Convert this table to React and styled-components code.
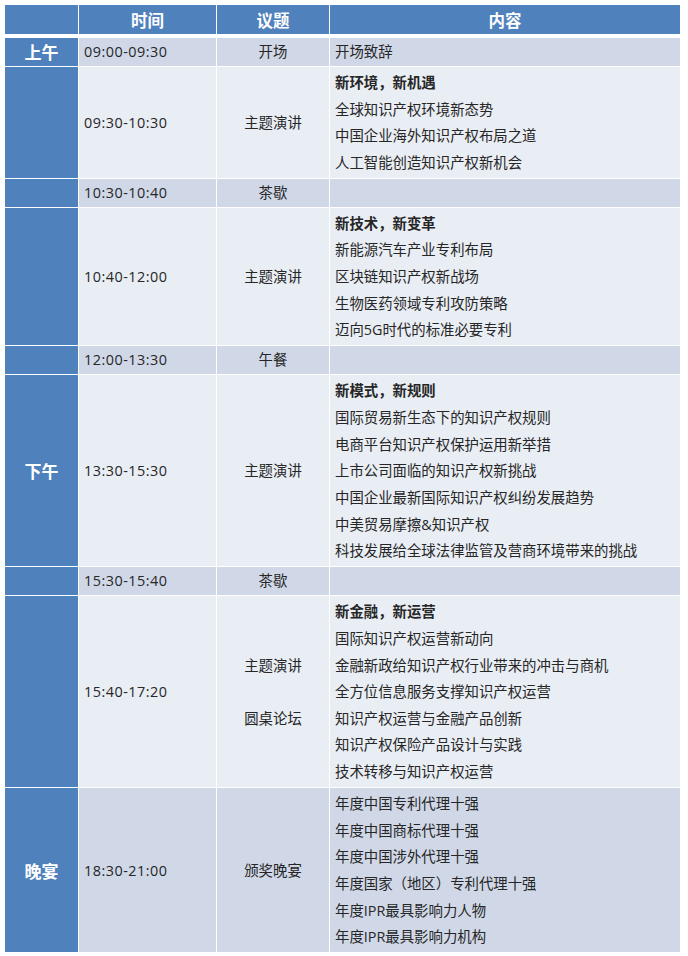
import React from 'react';
import styled, { createGlobalStyle } from 'styled-components';

const Global = createGlobalStyle`
  html, body { margin: 0; padding: 0; background: #ffffff; }
  body { font-family: "Open Sans", "Noto Sans CJK SC", sans-serif; }
`;

const Page = styled.div`
  padding: 5px 0 0 5px;
`;

const Grid = styled.div`
  display: grid;
  grid-template-columns: 73px 137px 112px 350px;
  column-gap: 1px;
  row-gap: 1px;
  width: 675px;
  background: #ffffff;
`;

const HeadCell = styled.div`
  height: 29px;
  margin-bottom: 3px;
  background: #4f81bd;
  color: #ffffff;
  font-family: "Noto Sans CJK SC", sans-serif;
  font-weight: 700;
  font-size: 16.5px;
  display: flex;
  align-items: center;
  justify-content: center;
`;

const SessionCell = styled.div`
  background: #4f81bd;
  color: #ffffff;
  font-family: "Noto Sans CJK SC", sans-serif;
  font-weight: 700;
  font-size: 17px;
  display: flex;
  align-items: center;
  justify-content: center;
`;

const Cell = styled.div`
  background: ${p => (p.$dark ? '#d0d8e8' : '#e9edf4')};
  color: #262626;
  font-size: 14.4px;
  line-height: 26.67px;
  display: flex;
  flex-direction: column;
  justify-content: center;
  align-items: ${p => (p.$center ? 'center' : 'flex-start')};
  padding: ${p => (p.$single ? '0.7px 5px 0.6px' : '3px 5px 1.3px')};
`;

const TimeText = styled.span`
  letter-spacing: 0.5px;
`;

const Line = styled.div`
  height: 26.67px;
  white-space: nowrap;
  font-weight: ${p => (p.$bold ? 700 : 400)};
`;

const rows = [
  { session: '上午', time: '09:00-09:30', topic: ['开场'], items: ['开场致辞'] },
  {
    time: '09:30-10:30',
    topic: ['主题演讲'],
    title: '新环境，新机遇',
    items: ['全球知识产权环境新态势', '中国企业海外知识产权布局之道', '人工智能创造知识产权新机会'],
  },
  { time: '10:30-10:40', topic: ['茶歇'], items: [''] },
  {
    time: '10:40-12:00',
    topic: ['主题演讲'],
    title: '新技术，新变革',
    items: ['新能源汽车产业专利布局', '区块链知识产权新战场', '生物医药领域专利攻防策略', '迈向5G时代的标准必要专利'],
  },
  { time: '12:00-13:30', topic: ['午餐'], items: [''] },
  {
    session: '下午',
    time: '13:30-15:30',
    topic: ['主题演讲'],
    title: '新模式，新规则',
    items: [
      '国际贸易新生态下的知识产权规则',
      '电商平台知识产权保护运用新举措',
      '上市公司面临的知识产权新挑战',
      '中国企业最新国际知识产权纠纷发展趋势',
      '中美贸易摩擦&知识产权',
      '科技发展给全球法律监管及营商环境带来的挑战',
    ],
  },
  { time: '15:30-15:40', topic: ['茶歇'], items: [''] },
  {
    time: '15:40-17:20',
    topic: ['主题演讲', '', '圆桌论坛'],
    title: '新金融，新运营',
    items: [
      '国际知识产权运营新动向',
      '金融新政给知识产权行业带来的冲击与商机',
      '全方位信息服务支撑知识产权运营',
      '知识产权运营与金融产品创新',
      '知识产权保险产品设计与实践',
      '技术转移与知识产权运营',
    ],
  },
  {
    session: '晚宴',
    time: '18:30-21:00',
    topic: ['颁奖晚宴'],
    items: [
      '年度中国专利代理十强',
      '年度中国商标代理十强',
      '年度中国涉外代理十强',
      '年度国家（地区）专利代理十强',
      '年度IPR最具影响力人物',
      '年度IPR最具影响力机构',
    ],
  },
];

export default function App() {
  return (
    <Page>
      <Global />
      <Grid>
        <HeadCell />
        <HeadCell>时间</HeadCell>
        <HeadCell>议题</HeadCell>
        <HeadCell>内容</HeadCell>
        {rows.map((r, i) => {
          const dark = i % 2 === 0;
          const single = !r.title && r.items.length === 1;
          return (
            <React.Fragment key={i}>
              <SessionCell>{r.session || ''}</SessionCell>
              <Cell $dark={dark} $single={single}>
                <TimeText>{r.time}</TimeText>
              </Cell>
              <Cell $dark={dark} $single={single} $center>
                {r.topic.map((t, j) => (
                  <Line key={j}>{t || '\u00a0'}</Line>
                ))}
              </Cell>
              <Cell $dark={dark} $single={single}>
                {r.title && <Line $bold>{r.title}</Line>}
                {r.items.map((t, j) => (
                  <Line key={j}>{t || '\u00a0'}</Line>
                ))}
              </Cell>
            </React.Fragment>
          );
        })}
      </Grid>
    </Page>
  );
}
